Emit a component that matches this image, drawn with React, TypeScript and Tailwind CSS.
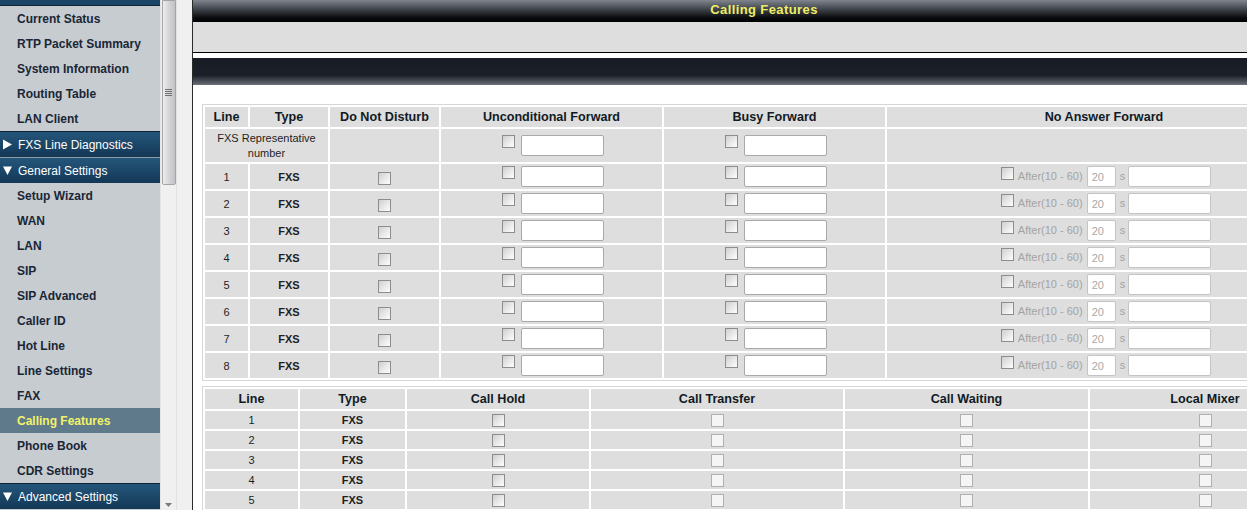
import React from "react";

const lines = [1, 2, 3, 4, 5, 6, 7, 8];
const holdLines = [1, 2, 3, 4, 5];

function NavItem({ label, active }: { label: string; active?: boolean }) {
  return (
    <div
      className={`h-[25px] flex items-center pl-[17px] text-[12px] font-bold whitespace-nowrap ${
        active ? "bg-[#5f7a8b] text-[#f3f36a]" : "text-[#1a2636]"
      }`}
    >
      {label}
    </div>
  );
}

function NavHeader({ label, open, topLine }: { label: string; open?: boolean; topLine: string }) {
  return (
    <div
      className={`h-[26px] flex items-center pl-[3px] gap-[6px] text-white text-[12px] whitespace-nowrap border-t ${topLine} bg-[linear-gradient(to_bottom,#24567b,#1a4465_60%,#143756)]`}
    >
      <svg width="9" height="11" viewBox="0 0 9 11" className="shrink-0">
        {open ? <path d="M0 1.5 H9 L4.5 10 Z" fill="#fff" /> : <path d="M0 0.5 L9 5.5 L0 10.5 Z" fill="#fff" />}
      </svg>
      <span>{label}</span>
    </div>
  );
}

function Check({ dim }: { dim?: boolean }) {
  return (
    <span
      className={`inline-block w-[13px] h-[13px] border shrink-0 ${
        dim
          ? "border-[#b0b0b0] bg-[#f5f5f5]"
          : "border-[#8d8d8d] bg-[linear-gradient(135deg,#cfcfcf,#ececec_60%,#fdfdfd)]"
      }`}
    />
  );
}

function Box({ w, value, muted }: { w: string; value?: string; muted?: boolean }) {
  return (
    <input
      type="text"
      readOnly
      defaultValue={value ?? ""}
      className={`${w} h-[21px] rounded-[2px] bg-white border px-[4px] text-[11px] outline-none ${
        muted ? "border-[#c4c4c4] text-[#a8a8a8]" : "border-[#a9a9a9] text-[#222]"
      }`}
    />
  );
}

function Forward() {
  return (
    <div className="flex items-start justify-center gap-[6px] pl-[2px]">
      <Check />
      <Box w="w-[83px]" />
    </div>
  );
}

function NoAnswer() {
  return (
    <div className="flex items-start justify-center pl-[4px] text-[11px] text-[#a3a3a3]">
      <span className="mt-[1px]">
        <Check />
      </span>
      <span className="ml-[4px] h-[21px] leading-[21px]">After(10 - 60)</span>
      <span className="ml-[4px]">
        <Box w="w-[29px]" value="20" muted />
      </span>
      <span className="ml-[4px] h-[21px] leading-[21px]">s</span>
      <span className="ml-[3px]">
        <Box w="w-[83px]" muted />
      </span>
    </div>
  );
}

const th = "bg-[#dedede] text-[12.6px] font-bold text-[#111a24] text-center align-middle p-0 whitespace-nowrap";
const td = "bg-[#dedede] text-[11px] text-[#1e1e1e] text-center align-middle p-0";

function ForwardTable() {
  return (
    <table className="table-fixed border-separate border-spacing-[2px] border border-[#d6d6d6] w-[1120px]">
      <colgroup>
        <col className="w-[43px]" />
        <col className="w-[78px]" />
        <col className="w-[109px]" />
        <col className="w-[221px]" />
        <col className="w-[221px]" />
        <col className="w-[434px]" />
      </colgroup>
      <thead>
        <tr className="h-[20px]">
          <th className={th}>Line</th>
          <th className={th}>Type</th>
          <th className={th}>Do Not Disturb</th>
          <th className={th}>Unconditional Forward</th>
          <th className={th}>Busy Forward</th>
          <th className={th}>No Answer Forward</th>
        </tr>
      </thead>
      <tbody>
        <tr className="h-[33px]">
          <td colSpan={2} className={`${td} leading-[15px]`}>
            FXS Representative
            <br />
            number
          </td>
          <td className={td}></td>
          <td className={td}>
            <Forward />
          </td>
          <td className={td}>
            <Forward />
          </td>
          <td className={td}></td>
        </tr>
        {lines.map((n) => (
          <tr key={n} className="h-[25px]">
            <td className={`${td} pt-[2px]`}>{n}</td>
            <td className={`${td} font-bold pt-[2px]`}>FXS</td>
            <td className={td}>
              <div className="flex justify-center pt-[4px]">
                <Check />
              </div>
            </td>
            <td className={td}>
              <Forward />
            </td>
            <td className={td}>
              <Forward />
            </td>
            <td className={td}>
              <NoAnswer />
            </td>
          </tr>
        ))}
      </tbody>
    </table>
  );
}

function FeatureTable() {
  return (
    <table className="table-fixed border-separate border-spacing-[2px] border border-[#d6d6d6] w-[1117px]">
      <colgroup>
        <col className="w-[93px]" />
        <col className="w-[105px]" />
        <col className="w-[182px]" />
        <col className="w-[252px]" />
        <col className="w-[243px]" />
        <col className="w-[230px]" />
      </colgroup>
      <thead>
        <tr className="h-[20px]">
          <th className={`${th} pt-[1px]`}>Line</th>
          <th className={`${th} pt-[1px]`}>Type</th>
          <th className={`${th} pt-[1px]`}>Call Hold</th>
          <th className={`${th} pt-[1px]`}>Call Transfer</th>
          <th className={`${th} pt-[1px]`}>Call Waiting</th>
          <th className={`${th} pt-[1px]`}>Local Mixer</th>
        </tr>
      </thead>
      <tbody>
        {holdLines.map((n) => (
          <tr key={n} className="h-[18px]">
            <td className={td}>{n}</td>
            <td className={`${td} font-bold`}>FXS</td>
            <td className={td}>
              <div className="flex justify-center">
                <Check />
              </div>
            </td>
            <td className={td}>
              <div className="flex justify-center">
                <Check dim />
              </div>
            </td>
            <td className={td}>
              <div className="flex justify-center">
                <Check dim />
              </div>
            </td>
            <td className={td}>
              <div className="flex justify-center">
                <Check dim />
              </div>
            </td>
          </tr>
        ))}
      </tbody>
    </table>
  );
}

export default function App() {
  return (
    <div className="w-[1247px] h-[510px] overflow-hidden flex bg-white font-['Liberation_Sans',Arial,sans-serif]">
      {/* left navigation frame */}
      <div className="w-[192px] shrink-0 flex bg-[#f0f0f0]">
        <div className="w-[160px] shrink-0 bg-[#c6ccd0] flex flex-col">
          <div className="h-[6px] bg-[#1b4466] border-b border-[#0f2233]" />
          <NavItem label="Current Status" />
          <NavItem label="RTP Packet Summary" />
          <NavItem label="System Information" />
          <NavItem label="Routing Table" />
          <NavItem label="LAN Client" />
          <NavHeader label="FXS Line Diagnostics" topLine="border-[#0f2233]" />
          <NavHeader label="General Settings" open topLine="border-[#8d9ba6]" />
          <NavItem label="Setup Wizard" />
          <NavItem label="WAN" />
          <NavItem label="LAN" />
          <NavItem label="SIP" />
          <NavItem label="SIP Advanced" />
          <NavItem label="Caller ID" />
          <NavItem label="Hot Line" />
          <NavItem label="Line Settings" />
          <NavItem label="FAX" />
          <NavItem label="Calling Features" active />
          <NavItem label="Phone Book" />
          <NavItem label="CDR Settings" />
          <NavHeader label="Advanced Settings" open topLine="border-[#0f2233]" />
        </div>
        {/* scrollbar */}
        <div className="w-[17px] shrink-0 border-l border-[#e4e4e4] border-r border-r-[#e2e2e2] bg-[#f0f0f0] flex flex-col justify-between items-center">
          <div className="w-[14px] h-[185px] border border-[#a4a4a8] rounded-b-[2px] bg-[linear-gradient(to_right,#eeeeee,#d6d6da_45%,#c2c2c6)] flex items-center justify-center">
            <div className="flex flex-col gap-[1px] -mt-[1px]">
              <div className="w-[7px] h-[1px] bg-[#707070]" />
              <div className="w-[7px] h-[1px] bg-[#707070]" />
              <div className="w-[7px] h-[1px] bg-[#707070]" />
              <div className="w-[7px] h-[1px] bg-[#707070]" />
            </div>
          </div>
          <svg width="7" height="4" viewBox="0 0 7 4" className="mb-[3px]">
            <path d="M0 0 H7 L3.5 4 Z" fill="#7a7a7a" />
          </svg>
        </div>
      </div>

      {/* main frame */}
      <div className="flex-1 min-w-0 overflow-hidden border-l border-[#2b2b2b]">
        <div className="w-[1142px]">
          <div className="h-[22px] flex items-center justify-center bg-[linear-gradient(to_bottom,#80858e,#3b3f46_45%,#0b0c0e_80%,#000)]">
            <span className="text-[13px] font-bold tracking-[0.4px] text-[#eeee66] -mt-[3px]">Calling Features</span>
          </div>
          <div className="h-[31px] bg-[#dedede] border-b border-r border-black" />
          <div className="mt-[5px] h-[27px] bg-[linear-gradient(to_bottom,#181c24,#1b2029_65%,#6b7079)]" />
          <div className="mt-[19px] pl-[9px]">
            <ForwardTable />
          </div>
          <div className="mt-[5px] pl-[9px]">
            <FeatureTable />
          </div>
        </div>
      </div>
    </div>
  );
}
